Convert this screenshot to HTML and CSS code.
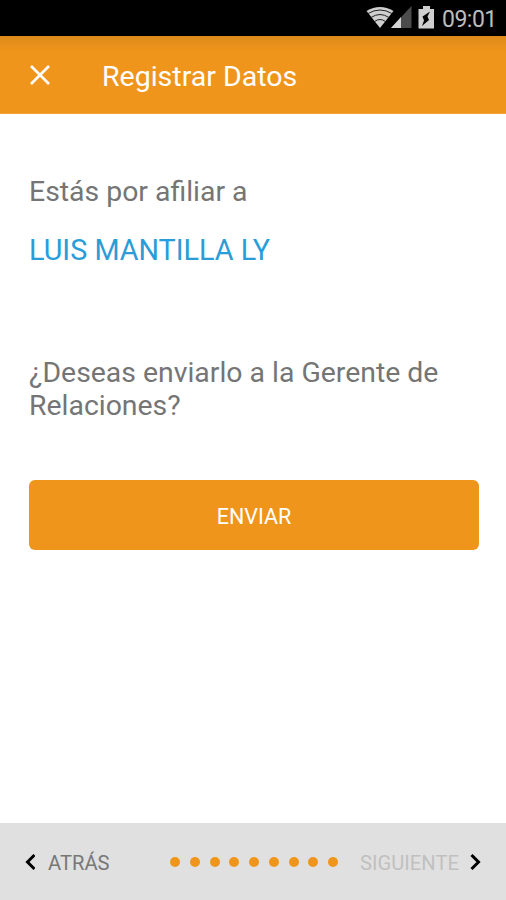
FILE: index.html
```html
<!DOCTYPE html>
<html lang="es">
<head>
<meta charset="utf-8">
<title>Registrar Datos</title>
<link rel="stylesheet" href="styles.css">
</head>
<body>
<div class="screen">
  <div class="status">
    <svg class="status-icons" width="72" height="36" viewBox="0 0 72 36">
      <path d="M0.500 11Q14 3 27.500 11L14 28Z" fill="#cfcfcf"/>
      <path d="M2 13.500Q14 6.500 26 13.500M5 17.500Q14 11.500 23 17.500M8.500 21.500Q14 17.500 19.500 21.500" fill="none" stroke="#222" stroke-width="1"/>
      <path d="M45.500 6V28H25Z" fill="#4c4c4c"/>
      <path d="M35 17V28H25Z" fill="#d4d4d4"/>
      <path d="M57 6h7v3h4v19.500H52.500V9H57Z" fill="#cfcfcf"/>
      <path d="M64 11.500L56.500 16.500l1.500 4L56 26l7-6-1.500-3.500Z" fill="#000"/>
    </svg>
    <span class="clock">09:01</span>
  </div>
  <header class="appbar">
    <svg class="close" width="20" height="20" viewBox="0 0 20 20"><path d="M1 1L19 19M19 1L1 19" stroke="#fff" stroke-width="2.600"/></svg>
    <h1 class="title">Registrar Datos</h1>
  </header>
  <main class="content">
    <p class="intro">Estás por afiliar a</p>
    <p class="name">LUIS MANTILLA LY</p>
    <p class="question">¿Deseas enviarlo a la Gerente de<br>Relaciones?</p>
    <button class="send"><span class="send-label">ENVIAR</span></button>
  </main>
  <footer class="steps">
    <svg class="chevron" width="12" height="18" viewBox="0 0 12 18"><path d="M11.500 2L4.500 9L11.500 16" fill="none" stroke="#000" stroke-width="3"/></svg>
    <span class="back">ATRÁS</span>
    <div class="dots"><i></i><i></i><i></i><i></i><i></i><i></i><i></i><i></i><i></i></div>
    <span class="next">SIGUIENTE</span>
    <svg class="chevron" width="12" height="18" viewBox="0 0 12 18"><path d="M2.500 2L9.500 9L2.500 16" fill="none" stroke="#000" stroke-width="3"/></svg>
  </footer>
</div>
</body>
</html>
```
FILE: styles.css
```css
* { box-sizing: border-box; }
body, p, h1 { margin: 0; }
body { font-family: Roboto, sans-serif; background: #fff; }
.screen { width: 506px; height: 900px; display: flex; flex-direction: column; overflow: hidden; }
.status { height: 36px; background: #000; display: flex; padding-left: 366px; }
.status-icons { flex: none; }
.clock { margin-left: 4px; font-size: 23px; line-height: 39px; letter-spacing: -0.500px; color: #bcbcbc; }
.appbar { height: 78px; background: linear-gradient(#dd8a1b, #f0951b 16px); border-bottom: 1px solid #f3a23a; display: flex; align-items: center; padding-left: 30px; }
.close { flex: none; }
.title { margin-left: 52px; padding-top: 4px; font-size: 28.500px; line-height: 32px; font-weight: 400; color: #fff; white-space: nowrap; }
.content { flex: 1; padding: 61px 27px 0 29px; font-size: 28.400px; line-height: 33px; color: #757575; white-space: nowrap; }
.name { margin-top: 26px; font-size: 28.750px; color: #2a9dd8; }
.question { margin-top: 89px; }
.send { display: block; width: 450px; height: 70px; margin-top: 57.500px; padding: 3px 0 0; border: 0; border-radius: 6px; background: #f0951b; color: #fff; font: 21.500px/67px Roboto, sans-serif; }
.steps { height: 77px; background: #e0e0e0; display: flex; align-items: center; padding: 0 24px 0 23px; font-size: 20.200px; line-height: 24px; color: #777; }
.back, .next { padding-top: 2px; }
.back { margin-left: 13px; width: 62px; }
.dots { display: flex; justify-content: space-between; width: 168px; margin-left: 60px; }
.dots i { width: 10px; height: 10px; border-radius: 50%; background: #f0951b; }
.next { margin-left: 22px; width: 99px; margin-right: 10px; color: #c0c0c0; }
.chevron { flex: none; }
```
